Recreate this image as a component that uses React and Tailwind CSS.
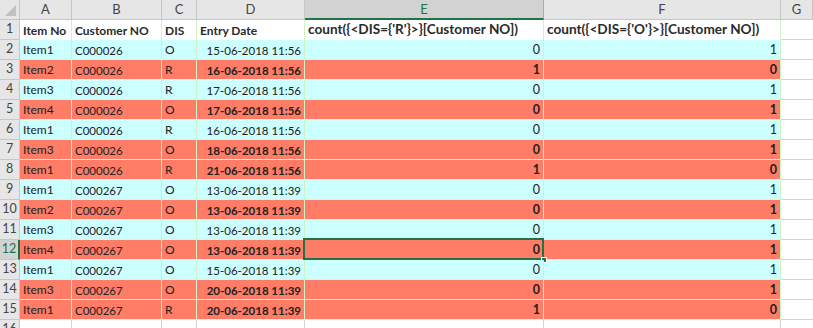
const rows = [
  ["Item1", "C000026", "O", "15-06-2018 11:56", 0, 1, "c"],
  ["Item2", "C000026", "R", "16-06-2018 11:56", 1, 0, "s"],
  ["Item3", "C000026", "R", "17-06-2018 11:56", 0, 1, "c"],
  ["Item4", "C000026", "O", "17-06-2018 11:56", 0, 1, "s"],
  ["Item1", "C000026", "R", "16-06-2018 11:56", 0, 1, "c"],
  ["Item3", "C000026", "O", "18-06-2018 11:56", 0, 1, "s"],
  ["Item1", "C000026", "R", "21-06-2018 11:56", 1, 0, "s"],
  ["Item1", "C000267", "O", "13-06-2018 11:39", 0, 1, "c"],
  ["Item2", "C000267", "O", "13-06-2018 11:39", 0, 1, "s"],
  ["Item3", "C000267", "O", "13-06-2018 11:39", 0, 1, "c"],
  ["Item4", "C000267", "O", "13-06-2018 11:39", 0, 1, "s"],
  ["Item1", "C000267", "O", "15-06-2018 11:39", 0, 1, "c"],
  ["Item3", "C000267", "O", "20-06-2018 11:39", 0, 1, "s"],
  ["Item1", "C000267", "R", "20-06-2018 11:39", 1, 0, "s"],
];

const cols = "grid grid-cols-[20px_52px_90px_35px_108px_239px_237px_32px]";

function ColHead({ label, active }) {
  return (
    <div
      className={
        active
          ? "h-[20px] flex items-center justify-center text-[13px] bg-[#d2d2d2] border-r border-[#ababab] border-b-2 border-b-[#217346] text-[#217346]"
          : "h-[20px] flex items-center justify-center text-[13px] bg-[#e6e6e6] border-r border-b border-[#c6c6c6] text-[#444]"
      }
    >
      {label}
    </div>
  );
}

function RowHead({ n, active }) {
  return (
    <div
      className={
        active
          ? "h-[20px] flex items-center justify-center text-[12.5px] bg-[#d2d2d2] border-r-2 border-r-[#217346] border-b border-b-[#c6c6c6] text-[#217346]"
          : "h-[20px] flex items-center justify-center text-[12.5px] bg-[#e6e6e6] border-r border-b border-[#c6c6c6] text-[#444]"
      }
    >
      {n}
    </div>
  );
}

export default function App() {
  const head = "h-[20px] flex items-end pb-[3px] pl-[3px] font-bold border-r border-[#cdf2c4] whitespace-nowrap text-[#2a2a2a]";
  return (
    <div className="w-[813px] h-[328px] overflow-hidden bg-white text-[12px] text-[#222] font-['Lato','Liberation_Sans',sans-serif] leading-none">
      <div className={cols}>
        <div className="h-[20px] bg-[#e6e6e6] border-r border-b border-[#c6c6c6] relative">
          <div className="absolute right-[3px] bottom-[3px] w-0 h-0 border-l-[11px] border-l-transparent border-b-[11px] border-b-[#c0c0c0]" />
        </div>
        <ColHead label="A" />
        <ColHead label="B" />
        <ColHead label="C" />
        <ColHead label="D" />
        <ColHead label="E" active />
        <ColHead label="F" />
        <ColHead label="G" />

        <RowHead n={1} />
        <div className={head}>Item No</div>
        <div className={head}>Customer NO</div>
        <div className={head}>DIS</div>
        <div className={head}>Entry Date</div>
        <div className={`${head} text-[13.6px]`}>{"count({<DIS={'R'}>}[Customer NO])"}</div>
        <div className={`${head} text-[13.6px]`}>{"count({<DIS={'O'}>}[Customer NO])"}</div>
        <div className="h-[20px] border-b border-[#d4d4d4]" />

        {rows.map((r, i) => {
          const n = i + 2;
          const salmon = r[6] === "s";
          const bg = salmon ? "bg-[#ff7c67]" : "bg-[#ccffff]";
          const bold = salmon ? "font-bold" : "";
          const cell = `h-[20px] flex items-end pb-[3px] ${bg} border-r border-r-[#cdf2c4] border-b border-b-[#eef0b4] whitespace-nowrap`;
          const sel = n === 12;
          return (
            <div key={n} className="contents">
              <RowHead n={n} active={sel} />
              <div className={`${cell} pl-[3px]`}>{r[0]}</div>
              <div className={`${cell} pl-[3px] text-[11.5px]`}>{r[1]}</div>
              <div className={`${cell} pl-[3px]`}>{r[2]}</div>
              <div className={`${cell} justify-end pr-[3px] text-[11.5px] ${bold}`}>{r[3]}</div>
              <div className={`${cell} justify-end pr-[3px] text-[12.5px] ${bold} relative`}>
                {r[4]}
                {sel && (
                  <>
                    <div className="absolute left-[-2px] top-[-2px] right-[-1px] bottom-[-1px] border-2 border-[#217346]" />
                    <div className="absolute right-[-4px] bottom-[-4px] w-[6px] h-[6px] bg-[#217346] border border-white" />
                  </>
                )}
              </div>
              <div className={`${cell} justify-end pr-[3px] text-[12.5px] ${bold}`}>{r[5]}</div>
              <div className="h-[20px] border-b border-[#d4d4d4]" />
            </div>
          );
        })}

        <RowHead n={16} />
        <div className="h-[20px] border-r border-b border-[#d4d4d4]" />
        <div className="h-[20px] border-r border-b border-[#d4d4d4]" />
        <div className="h-[20px] border-r border-b border-[#d4d4d4]" />
        <div className="h-[20px] border-r border-b border-[#d4d4d4]" />
        <div className="h-[20px] border-r border-b border-[#d4d4d4]" />
        <div className="h-[20px] border-r border-b border-[#d4d4d4]" />
        <div className="h-[20px] border-b border-[#d4d4d4]" />
      </div>
    </div>
  );
}
